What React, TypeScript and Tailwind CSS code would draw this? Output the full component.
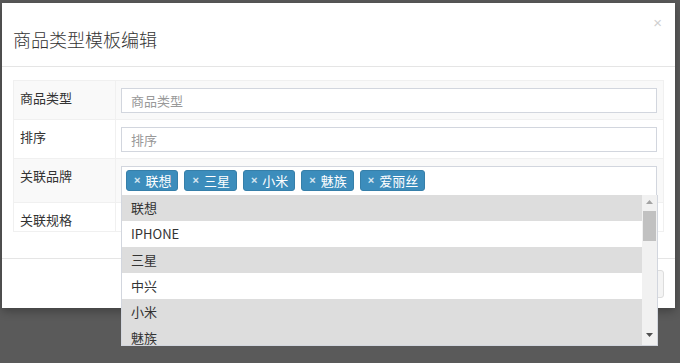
import React from "react";

const tags = ["联想", "三星", "小米", "魅族", "爱丽丝"];

const options = [
  { name: "联想", selected: true },
  { name: "IPHONE", selected: false },
  { name: "三星", selected: true },
  { name: "中兴", selected: false },
  { name: "小米", selected: true },
  { name: "魅族", selected: true },
];

function Row({
  label,
  striped,
  height,
  children,
}: {
  label: string;
  striped?: boolean;
  height: string;
  children?: React.ReactNode;
}) {
  return (
    <div className={`flex border-b border-[#f0f0f0] ${height} ${striped ? "bg-[#f9f9f9]" : "bg-white"}`}>
      <div className="w-[102px] shrink-0 border-r border-[#f0f0f0] pl-[6px] pt-[8px] text-[13px] leading-[18px] text-[#333]">
        {label}
      </div>
      <div className="relative flex-1 pl-[5px] pr-[6px] pt-[7px]">{children}</div>
    </div>
  );
}

function Input({ placeholder }: { placeholder: string }) {
  return (
    <input
      placeholder={placeholder}
      className="block h-[25px] w-full border border-[#d2d6de] bg-white px-[9px] text-[13px] text-[#555] outline-none placeholder:text-[#999]"
    />
  );
}

export default function App() {
  return (
    <div
      className="relative h-[363px] w-[680px] overflow-hidden bg-[#5a5a5a] pl-[2px] pt-[3px]"
      style={{ fontFamily: '"Noto Sans CJK SC", "Open Sans", sans-serif' }}
    >
      <div className="h-[305px] w-[673px] bg-white shadow-[0_3px_9px_rgba(0,0,0,0.3)]">
        {/* header */}
        <div className="relative h-[64px] border-b border-[#e5e5e5] pl-[11px] pt-[25px]">
          <h4 className="text-[18px] leading-[22px] font-light text-[#333]">商品类型模板编辑</h4>
          <span className="absolute right-[13px] top-[12px] font-['Liberation_Sans',sans-serif] text-[15px] leading-[16px] text-[#d0d0d0]">
            ×
          </span>
        </div>

        {/* body */}
        <div className="h-[191px] px-[11px] pt-[13px]">
          <div className="border-l border-r border-t border-[#f0f0f0]">
            <Row label="商品类型" striped height="h-[39px]">
              <Input placeholder="商品类型" />
            </Row>
            <Row label="排序" height="h-[39px]">
              <Input placeholder="排序" />
            </Row>
            <Row label="关联品牌" striped height="h-[44px]">
              <div className="flex h-[31px] flex-wrap items-start gap-[6px] border border-b-0 border-[#d2d6de] bg-white pl-[4px] pt-[3px]">
                {tags.map((t) => (
                  <span
                    key={t}
                    className="flex h-[21px] items-center gap-[5px] rounded-[3px] border border-[#367fa9] bg-[#3c8dbc] pl-[7px] pr-[6px] text-[13px] leading-[19px] text-white"
                  >
                    <span className="font-['Liberation_Sans',sans-serif] text-[11px] font-bold text-white/80">×</span>
                    {t}
                  </span>
                ))}
              </div>
              {/* dropdown */}
              <div className="absolute left-[5px] top-[36px] z-10 flex h-[151px] w-[537px] border border-t-0 border-[#d2d6de] bg-white">
                <ul className="flex-1 overflow-hidden">
                  {options.map((o) => (
                    <li
                      key={o.name}
                      className={`h-[26px] pl-[9px] text-[13px] leading-[26px] text-[#333] ${o.selected ? "bg-[#dddddd]" : "bg-white"}`}
                    >
                      {o.name}
                    </li>
                  ))}
                </ul>
                <div className="flex w-[15px] flex-col items-center bg-[#f1f1f1]">
                  <svg width="15" height="14" viewBox="0 0 15 14" className="shrink-0">
                    <path d="M4 9 L7.5 5 L11 9 Z" fill="#a3a3a3" />
                  </svg>
                  <div className="mt-[2px] h-[30px] w-[13px] bg-[#c1c1c1]" />
                  <div className="flex-1" />
                  <svg width="15" height="14" viewBox="0 0 15 14" className="mb-[3px] shrink-0">
                    <path d="M4 5 L11 5 L7.5 9 Z" fill="#505050" />
                  </svg>
                </div>
              </div>
            </Row>
            <Row label="关联规格" height="h-[29px]" />
          </div>
        </div>

        {/* footer */}
        <div className="flex h-[50px] justify-end border-t border-[#e5e5e5] pr-[11px] pt-[11px]">
          <button className="h-[28px] rounded-[3px] border border-[#ddd] bg-[#f4f4f4] px-[12px] text-[13px] text-[#444]">
            关闭
          </button>
        </div>
      </div>
    </div>
  );
}
